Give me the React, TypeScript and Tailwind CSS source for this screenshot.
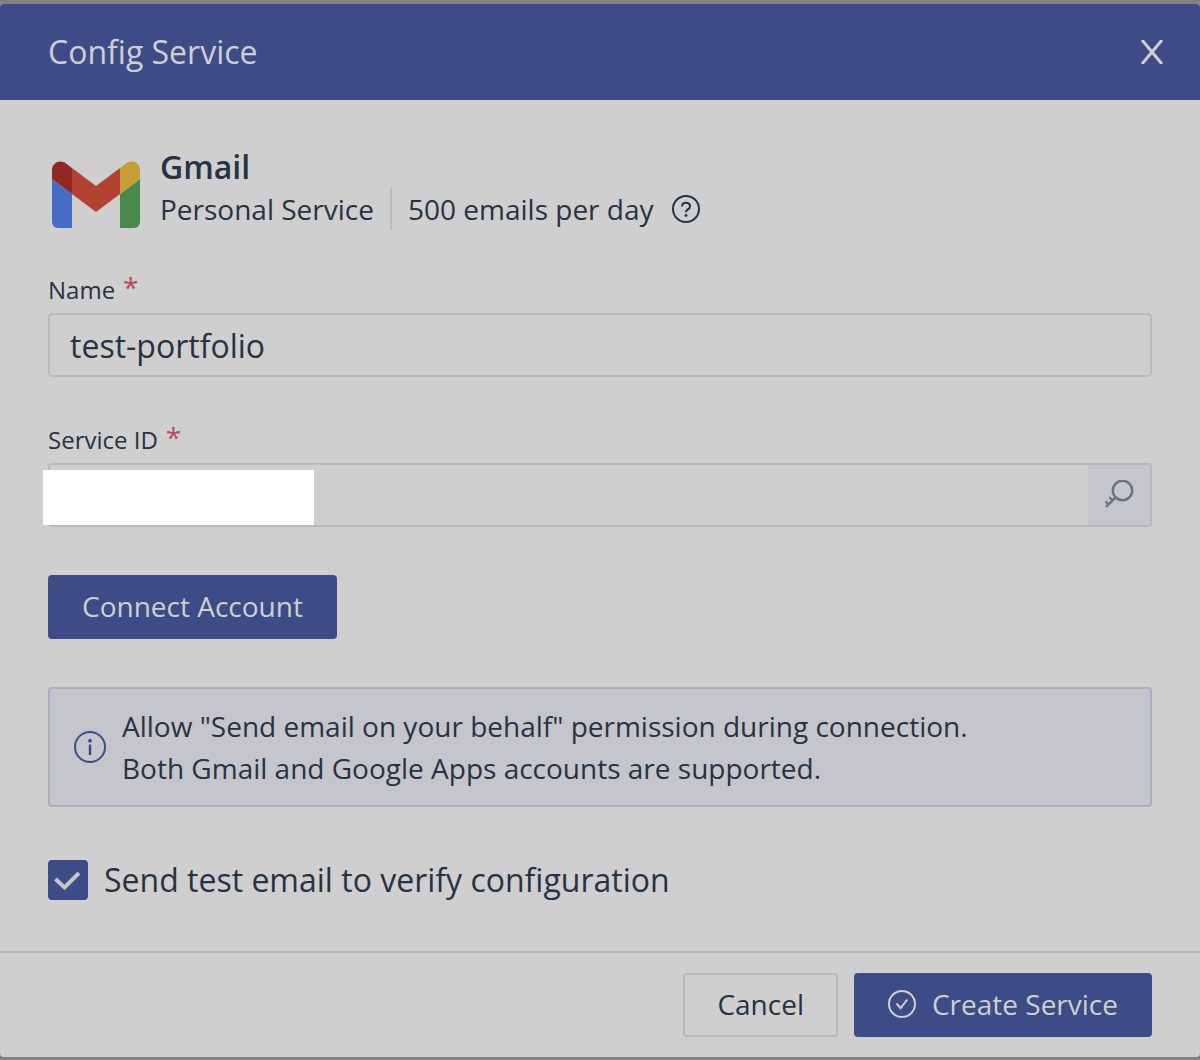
import React from "react";

function GmailLogo() {
  return (
    <svg width="88" height="67" viewBox="0 0 88 67" aria-label="Gmail logo" role="img">
      <path d="M0 18 20 33V67H6a6 6 0 0 1-6-6Z" fill="#466cc4" />
      <path d="M88 18 68 33V67H82a6 6 0 0 0 6-6Z" fill="#49894d" />
      <path d="M20 7 44 25 68 7V33L44 51 20 33Z" fill="#b04133" />
      <path d="M0 18V9C0 1.500 8.500-2.500 14.600 2.900L20 7V33Z" fill="#922822" />
      <path d="M88 18V9C88 1.500 79.500-2.500 73.400 2.900L68 7V33Z" fill="#c69d36" />
    </svg>
  );
}

function HelpIcon() {
  return (
    <svg width="28" height="28" viewBox="0 0 28 28" fill="none" stroke="currentColor" strokeWidth="2">
      <circle cx="14" cy="14" r="13" />
      <path d="M10 11.500C10 9 11.700 7.800 14 7.800s4 1.400 4 3.500c0 1.700-1 2.600-2.300 3.200-1.300.6-1.700 1.200-1.700 2.700" />
      <circle cx="14" cy="20.500" r="1.400" fill="currentColor" stroke="none" />
    </svg>
  );
}

function InfoIcon() {
  return (
    <svg className="shrink-0 text-[#3d4c86]" width="32" height="32" viewBox="0 0 32 32" fill="none">
      <circle cx="16" cy="16" r="15" stroke="currentColor" strokeWidth="2" />
      <circle cx="16" cy="9.700" r="1.900" fill="currentColor" />
      <rect x="14.800" y="13.500" width="2.400" height="10.500" fill="currentColor" />
    </svg>
  );
}

function KeyIcon() {
  return (
    <svg width="30" height="30" viewBox="0 0 30 30" fill="none" stroke="currentColor">
      <circle cx="18.500" cy="10.500" r="9.700" strokeWidth="2.400" />
      <path d="M11.500 17.500 2 27" strokeWidth="2.400" />
      <path d="M4.600 24.400 1.400 21.200M8.600 20.400 5.400 17.200" strokeWidth="2.200" />
    </svg>
  );
}

function CheckCircleIcon() {
  return (
    <svg width="28" height="28" viewBox="0 0 28 28" fill="none" stroke="currentColor" strokeWidth="2">
      <circle cx="14" cy="14" r="13" />
      <path d="M8.500 13.500 12.600 18.200 19.300 9.500" />
    </svg>
  );
}

function FieldLabel({ htmlFor, children }: { htmlFor: string; children: React.ReactNode }) {
  return (
    <label htmlFor={htmlFor} className="mb-2 flex gap-2 text-2xl leading-[30px]">
      {children}
      <span className="text-[28px] leading-6 text-[#ba4a5c]">*</span>
    </label>
  );
}

export default function App() {
  return (
    <div className="min-h-screen bg-[#828282] pt-1 pb-[3px] font-['Open_Sans',sans-serif] text-[28px] text-[#273342]">
      <div role="dialog" aria-labelledby="title" className="overflow-hidden rounded bg-[#cfcfcf]">
        <header className="flex h-24 items-center justify-between bg-[#3d4c86] pr-9 pl-12 text-[#cfcfcf]">
          <h1 id="title" className="text-[32px]">Config Service</h1>
          <button type="button" aria-label="Close">
            <svg width="24" height="24" viewBox="0 0 24 24" fill="none" stroke="currentColor" strokeWidth="3">
              <path d="M2 0 22 24M22 0 2 24" />
            </svg>
          </button>
        </header>

        <main className="px-12 py-[46px]">
          <section className="mb-[45px] flex items-center gap-5 pl-1">
            <div className="pt-3">
              <GmailLogo />
            </div>
            <div>
              <h2 className="text-[32px] leading-[42px] font-semibold">Gmail</h2>
              <div className="flex items-center leading-[42px]">
                <span className="border-r-2 border-[#bababa] pr-4">Personal Service</span>
                <span className="pl-4">500 emails per day</span>
                <button type="button" aria-label="Help" className="ml-[18px]">
                  <HelpIcon />
                </button>
              </div>
            </div>
          </section>

          <div className="mb-12">
            <FieldLabel htmlFor="name">Name</FieldLabel>
            <input
              id="name"
              defaultValue="test-portfolio"
              className="block h-16 w-full rounded border-2 border-[#bababa] bg-transparent px-5 text-[32px] outline-none"
            />
          </div>

          <div className="mb-12">
            <FieldLabel htmlFor="service-id">Service ID</FieldLabel>
            <div className="relative flex h-16">
              <input
                id="service-id"
                className="min-w-0 flex-1 rounded-l border-2 border-r-0 border-[#bababa] bg-transparent px-5 text-[32px] outline-none"
              />
              <button
                type="button"
                aria-label="Generate ID"
                className="flex w-16 items-center justify-center rounded-r border-2 border-l-0 border-[#b5b7bb] bg-[#c4c6cb] text-[#687280]"
              >
                <KeyIcon />
              </button>
              <div className="absolute top-[7px] -left-[5px] h-[55px] w-[271px] bg-white" />
            </div>
          </div>

          <button type="button" className="mb-12 block h-16 rounded bg-[#3d4c86] px-[34px] pb-0.5 text-[#cfcfcf]">
            Connect Account
          </button>

          <div className="mb-12 flex items-center gap-4 rounded border-2 border-[#a9b0c1] bg-[#c4c6cb] px-6 py-4">
            <InfoIcon />
            <p className="leading-[42px]">
              Allow "Send email on your behalf" permission during connection.
              <br />
              Both Gmail and Google Apps accounts are supported.
            </p>
          </div>

          <label className="flex items-center gap-4 text-[32px] leading-[50px]">
            <span className="relative block size-10">
              <input type="checkbox" defaultChecked className="peer block size-10 appearance-none rounded bg-[#3d4c86]" />
              <svg
                className="pointer-events-none absolute inset-0 hidden peer-checked:block"
                width="40"
                height="40"
                viewBox="0 0 40 40"
                fill="none"
                stroke="#c4c6cb"
                strokeWidth="4"
              >
                <path d="M7.500 19 16.500 27.500 31 13" />
              </svg>
            </span>
            Send test email to verify configuration
          </label>
        </main>

        <footer className="flex justify-end gap-4 border-t-2 border-[#bababa] px-12 py-5">
          <button type="button" className="h-16 rounded border-2 border-[#bababa] px-8 pb-0.5">
            Cancel
          </button>
          <button type="button" className="flex h-16 items-center gap-4 rounded bg-[#3d4c86] px-[34px] pb-0.5 text-[#cfcfcf]">
            <CheckCircleIcon />
            Create Service
          </button>
        </footer>
      </div>
    </div>
  );
}
